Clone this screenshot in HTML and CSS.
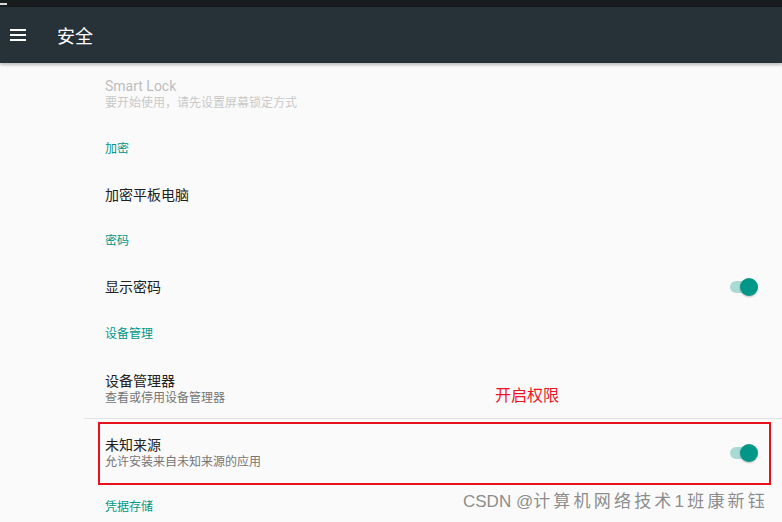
FILE: index.html
```html
<!DOCTYPE html>
<html lang="zh-CN">
<head>
<meta charset="utf-8">
<title>安全</title>
<link rel="stylesheet" href="styles.css">
</head>
<body>
<div class="screen">
  <div class="statusbar"><span class="status-mark"></span></div>
  <header class="appbar">
    <svg class="menu-icon" width="18" height="14" viewBox="0 0 18 14" aria-hidden="true">
      <rect x="0" y="0" width="16" height="2" fill="#fff"/>
      <rect x="0" y="5" width="16" height="2" fill="#fff"/>
      <rect x="0" y="10" width="16" height="2" fill="#fff"/>
    </svg>
    <h1 class="appbar-title">安全</h1>
  </header>
  <main class="list">
    <div class="item item-smartlock disabled">
      <div class="texts">
        <div class="title">Smart Lock</div>
        <div class="summary">要开始使用，请先设置屏幕锁定方式</div>
      </div>
    </div>
    <div class="category cat-encrypt">加密</div>
    <div class="item item-encrypt">
      <div class="texts"><div class="title">加密平板电脑</div></div>
    </div>
    <div class="category cat-password">密码</div>
    <div class="item item-showpw">
      <div class="texts"><div class="title">显示密码</div></div>
      <div class="switch"><span class="track"></span><span class="thumb"></span></div>
    </div>
    <div class="category cat-device">设备管理</div>
    <div class="item item-admin">
      <div class="texts">
        <div class="title">设备管理器</div>
        <div class="summary">查看或停用设备管理器</div>
      </div>
      <span class="annotation">开启权限</span>
    </div>
    <div class="divider"></div>
    <div class="item item-unknown">
      <div class="texts">
        <div class="title">未知来源</div>
        <div class="summary">允许安装来自未知来源的应用</div>
      </div>
      <div class="switch"><span class="track"></span><span class="thumb"></span></div>
      <span class="highlight"></span>
    </div>
    <div class="category cat-cred">凭据存储</div>
  </main>
  <div class="watermark">CSDN @<span class="wm-cjk">计算机网络技术1班康新钰</span></div>
</div>
</body>
</html>
```

FILE: styles.css
```css
html, body {
  margin: 0;
  padding: 0;
  background: #fafafa;
}
body {
  width: 782px;
  height: 522px;
  overflow: hidden;
  font-family: Roboto, "Noto Sans CJK SC", sans-serif;
}
.screen {
  position: relative;
  width: 782px;
  height: 522px;
  overflow: hidden;
  background: #fafafa;
}
.statusbar {
  height: 7px;
  background: #181c1f;
  position: relative;
}
.status-mark {
  position: absolute;
  left: 0;
  top: 3px;
  width: 7px;
  height: 2px;
  background: #d8d8d8;
}
.appbar {
  height: 56px;
  background: #263238;
  display: flex;
  align-items: center;
  padding-left: 10px;
  box-shadow: 0 2px 3px rgba(0, 0, 0, 0.25);
  position: relative;
  z-index: 2;
}
.menu-icon {
  display: block;
  margin-top: 2px;
}
.appbar-title {
  margin: 4px 0 0 29px;
  font-size: 18px;
  font-weight: 400;
  color: #ffffff;
  line-height: 24px;
}
.list {
  display: flex;
  flex-direction: column;
}
.item {
  position: relative;
  display: flex;
  align-items: center;
  justify-content: space-between;
  padding-left: 105px;
  padding-right: 24px;
  box-sizing: border-box;
}
.texts {
  display: flex;
  flex-direction: column;
}
.title {
  font-size: 14px;
  line-height: 18px;
  color: #212121;
}
.summary {
  font-size: 12px;
  line-height: 17px;
  color: #757575;
}
.disabled .title {
  color: #bdbdbd;
}
.disabled .summary {
  color: #c9c9c9;
}
.category {
  display: flex;
  align-items: center;
  padding-left: 105px;
  font-size: 12px;
  line-height: 16px;
  color: #009688;
}
.item-smartlock { height: 63px; }
.cat-encrypt { height: 46px; }
.item-encrypt { height: 45px; }
.cat-password { height: 48px; }
.item-showpw { height: 43px; }
.cat-device { height: 52px; }
.item-admin { height: 58px; }
.item-unknown { height: 68px; }
.cat-cred { height: 40px; }

.divider {
  height: 1px;
  margin-left: 84px;
  background: #e2e2e2;
}
.switch {
  position: relative;
  width: 28px;
  height: 18px;
  flex: none;
}
.track {
  position: absolute;
  left: 0;
  top: 3px;
  width: 26px;
  height: 12px;
  border-radius: 6px;
  background: #a9dad4;
}
.thumb {
  position: absolute;
  left: 10px;
  top: 0;
  width: 18px;
  height: 18px;
  border-radius: 50%;
  background: #009688;
  box-shadow: 0 1px 2px rgba(0, 0, 0, 0.25);
}
.annotation {
  position: absolute;
  left: 495px;
  top: 25px;
  font-size: 16px;
  line-height: 22px;
  color: #f0141e;
}
.highlight {
  position: absolute;
  left: 98px;
  right: 11px;
  top: 3px;
  bottom: 2px;
  border: 2px solid #e8101a;
  pointer-events: none;
}
.watermark {
  position: absolute;
  left: 463px;
  top: 490px;
  font-family: "Liberation Sans", "Noto Sans CJK SC", sans-serif;
  font-size: 17px;
  line-height: 24px;
  color: #8c8c8c;
  white-space: nowrap;
  text-shadow: 0 0 2px #ffffff;
}
.wm-cjk {
  letter-spacing: 3.2px;
}
```
